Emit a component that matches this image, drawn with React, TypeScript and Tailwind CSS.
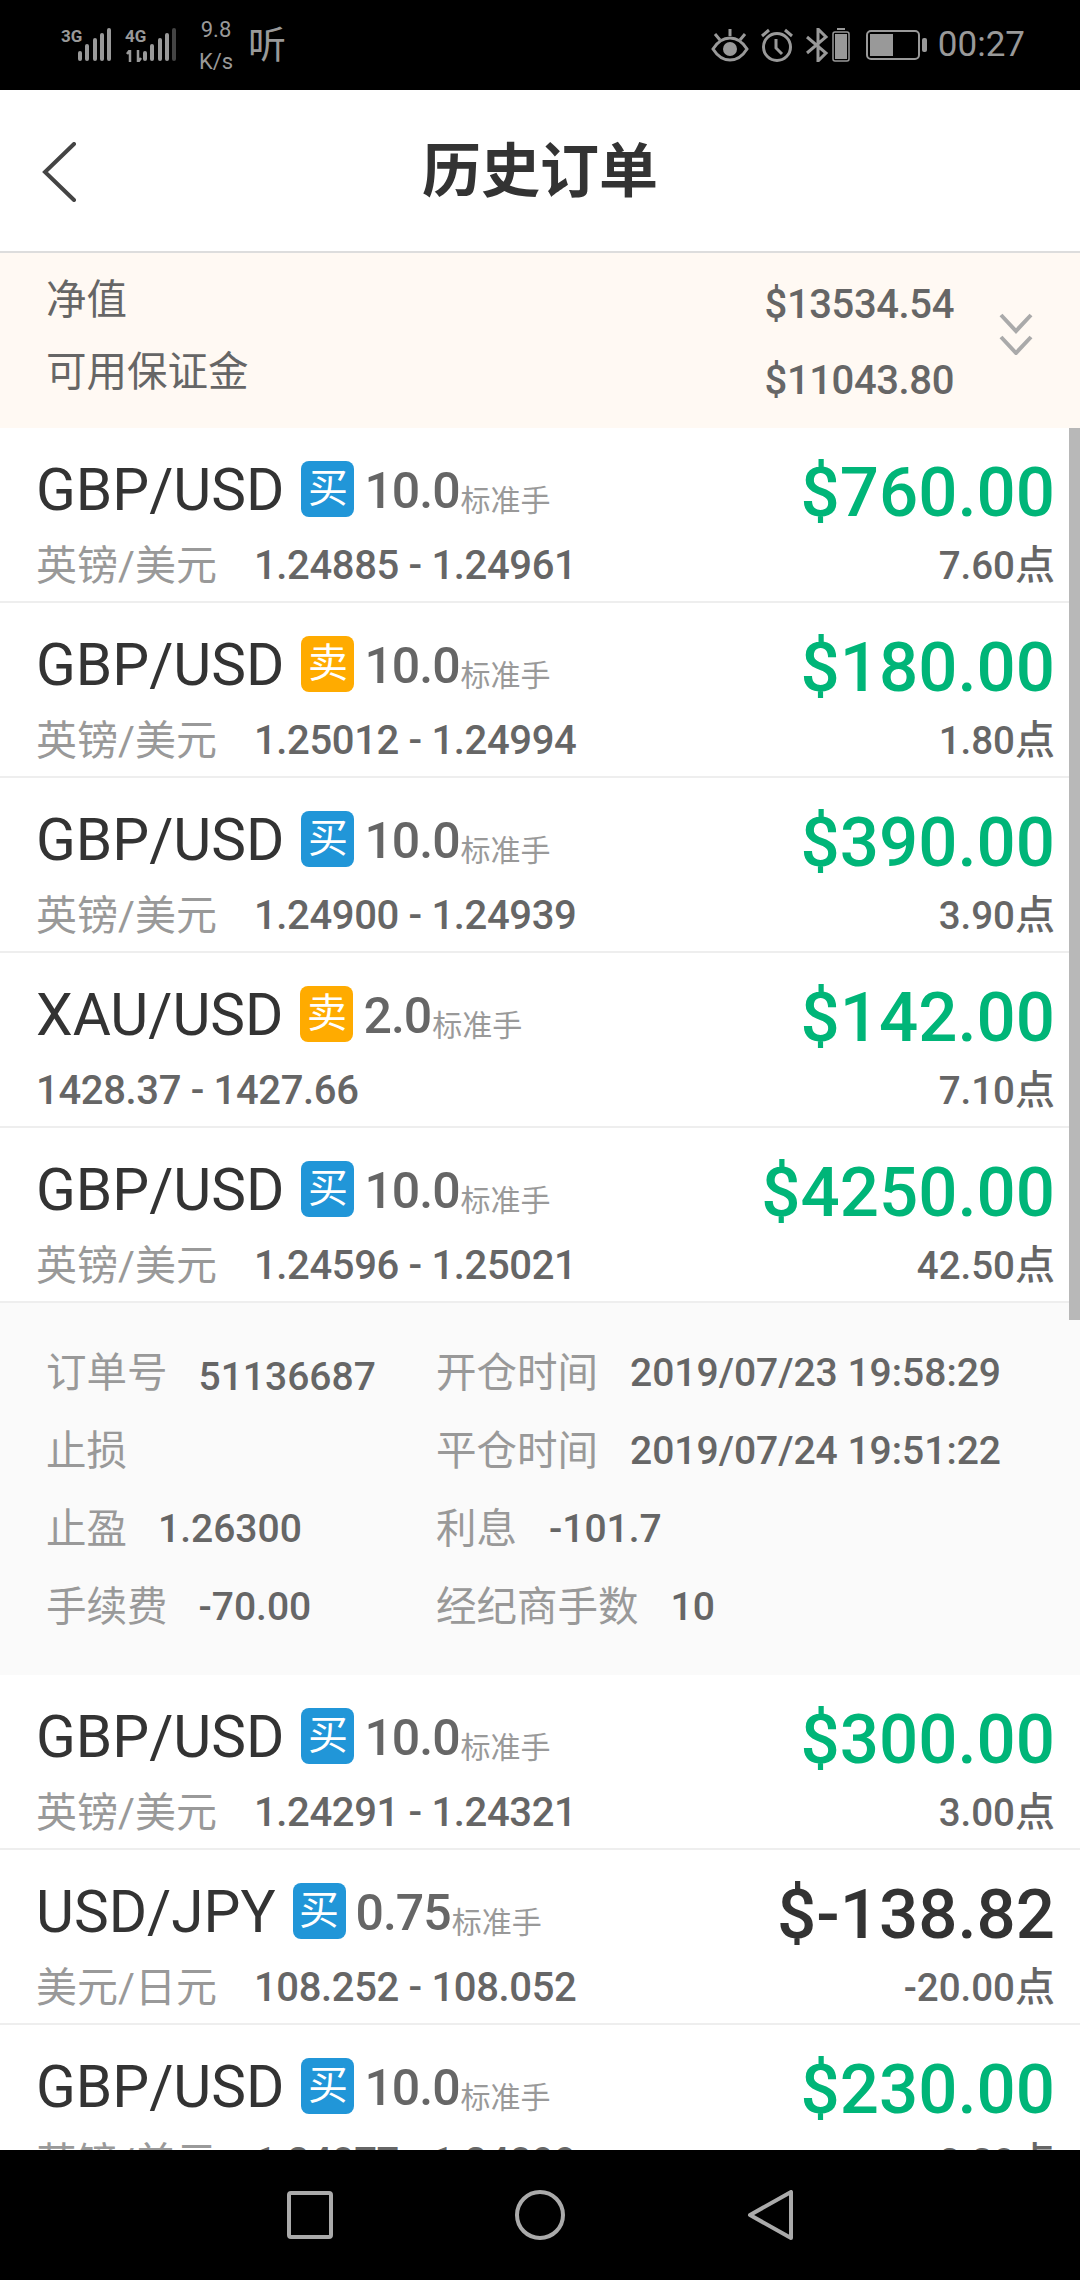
const orders = [
  { pair: 'GBP/USD', side: 'buy', lots: '10.0', name: '英镑/美元', range: '1.24885 - 1.24961', profit: '$760.00', points: '7.60' },
  { pair: 'GBP/USD', side: 'sell', lots: '10.0', name: '英镑/美元', range: '1.25012 - 1.24994', profit: '$180.00', points: '1.80' },
  { pair: 'GBP/USD', side: 'buy', lots: '10.0', name: '英镑/美元', range: '1.24900 - 1.24939', profit: '$390.00', points: '3.90' },
  { pair: 'XAU/USD', side: 'sell', lots: '2.0', name: '', range: '1428.37 - 1427.66', profit: '$142.00', points: '7.10' },
  { pair: 'GBP/USD', side: 'buy', lots: '10.0', name: '英镑/美元', range: '1.24596 - 1.25021', profit: '$4250.00', points: '42.50', open: true },
  { pair: 'GBP/USD', side: 'buy', lots: '10.0', name: '英镑/美元', range: '1.24291 - 1.24321', profit: '$300.00', points: '3.00' },
  { pair: 'USD/JPY', side: 'buy', lots: '0.75', name: '美元/日元', range: '108.252 - 108.052', profit: '$-138.82', points: '-20.00' },
  { pair: 'GBP/USD', side: 'buy', lots: '10.0', name: '英镑/美元', range: '1.24077 - 1.24099', profit: '$230.00', points: '2.30' },
];

const details = [
  ['订单号', '51136687', '开仓时间', '2019/07/23 19:58:29'],
  ['止损', '', '平仓时间', '2019/07/24 19:51:22'],
  ['止盈', '1.26300', '利息', '-101.7'],
  ['手续费', '-70.00', '经纪商手数', '10'],
];

function Bars({ dim }: { dim?: boolean }) {
  return (
    <svg width="35" height="33" viewBox="0 0 35 33" className="block">
      <rect x="0" y="23" width="4" height="10" rx="2" fill="#999" />
      <rect x="7" y="16" width="4" height="17" rx="2" fill="#999" />
      <rect x="15" y="10" width="4" height="23" rx="2" fill="#999" />
      <rect x="22" y="5" width="4" height="28" rx="2" fill="#999" />
      <rect x="29" y="0" width="4" height="33" rx="2" fill={dim ? '#444' : '#999'} />
    </svg>
  );
}

function StatusBar() {
  return (
    <div className="h-[90px] bg-black flex items-center justify-between pl-[61px] pr-[55px] text-[#999] shrink-0">
      <div className="flex items-center">
        <div className="relative w-[52px] h-[34px] flex justify-end">
          <span className="absolute left-0 top-[-2px] text-[17px] leading-[20px] font-bold">3G</span>
          <Bars />
        </div>
        <div className="relative w-[53px] h-[34px] ml-[12px] flex justify-end">
          <span className="absolute left-0 top-[-2px] text-[17px] leading-[20px] font-bold">4G</span>
          <svg width="18" height="12" viewBox="0 0 18 12" className="absolute left-0 bottom-0">
            <path d="M5 0v12M2 4l3-4M13 0v12l3-4" stroke="#999" strokeWidth="2.5" fill="none" />
          </svg>
          <Bars dim />
        </div>
        <div className="ml-[18px] w-[40px] text-center text-[22px] leading-[32px] mt-[1px]">
          <div>9.8</div>
          <div>K/s</div>
        </div>
        <span className="ml-[12px] text-[38px] leading-[40px]">听</span>
      </div>
      <div className="flex items-center">
        <svg width="38" height="34" viewBox="0 0 38 34" fill="none" stroke="#999" strokeWidth="3" className="block">
          <path d="M2 21c5-8 10-11 17-11s12 3 17 11c-5 8-10 11-17 11S7 29 2 21z" />
          <circle cx="19" cy="21" r="7" fill="#999" stroke="none" />
          <path d="M19 1v7M4 6l5 6M34 6l-5 6" />
        </svg>
        <svg width="34" height="34" viewBox="0 0 34 34" fill="none" stroke="#999" strokeWidth="3" className="block ml-[11px]">
          <circle cx="17" cy="19" r="13.5" />
          <path d="M16 11v9l6 6M2 8l7-6M32 8l-7-6" />
        </svg>
        <svg width="23" height="34" viewBox="0 0 23 34" fill="none" stroke="#999" strokeWidth="3" className="block ml-[12px]">
          <path d="M1 9l19 16-8 8V1l8 8L1 25" />
        </svg>
        <svg width="18" height="34" viewBox="0 0 18 34" className="block ml-[3px]">
          <rect x="5" y="0" width="8" height="2" fill="#999" />
          <rect x="1" y="4" width="16" height="29" rx="2" fill="none" stroke="#999" strokeWidth="1.5" />
          <rect x="3" y="6" width="12" height="25" fill="#999" />
        </svg>
        <svg width="61" height="30" viewBox="0 0 61 30" className="block ml-[16px]">
          <rect x="1" y="1" width="52" height="28" rx="4" fill="none" stroke="#999" strokeWidth="2" />
          <rect x="4" y="4" width="23" height="22" fill="#999" />
          <rect x="56" y="8" width="5" height="14" rx="2" fill="#999" />
        </svg>
        <span className="ml-[11px] text-[35px] leading-[40px]">00:27</span>
      </div>
    </div>
  );
}

function Header() {
  return (
    <div className="relative h-[163px] bg-white border-b-2 border-[#dddddd] flex items-center justify-center shrink-0">
      <svg width="36" height="60" viewBox="0 0 36 60" fill="none" stroke="#444" strokeWidth="4" strokeLinecap="round" className="absolute left-[41px] top-[52px]">
        <path d="M33 2L4 30l29 28" />
      </svg>
      <h1 className="text-[59px] leading-[80px] font-bold text-[#333] mt-[2px]">历史订单</h1>
    </div>
  );
}

function Summary() {
  return (
    <div className="h-[175px] bg-[#fff9f3] flex justify-between shrink-0 pl-[46px] pr-[47px]">
      <div className="pt-[22px] text-[40.5px] leading-[50px] text-[#666] flex flex-col gap-[22px]">
        <div>净值</div>
        <div>可用保证金</div>
      </div>
      <div className="flex items-center">
        <div className="text-[40px] tracking-[-0.4px] leading-[50px] font-medium text-[#666] flex flex-col gap-[26px] pt-[5px]">
          <div>$13534.54</div>
          <div>$11043.80</div>
        </div>
        <svg width="34" height="42" viewBox="0 0 34 42" fill="none" stroke="#aaa" strokeWidth="4" className="block ml-[45px] mb-[14px]">
          <path d="M2 2l15 16L32 2M2 24l15 16 15-16" />
        </svg>
      </div>
    </div>
  );
}

function OrderRow({ o }: { o: (typeof orders)[number] }) {
  const buy = o.side === 'buy';
  const loss = o.profit.startsWith('$-');
  return (
    <div className="h-[175px] border-b-2 border-[#eeeeee] flex justify-between pl-[36px] pr-[25px] pt-[19px]">
      <div>
        <div className="h-[84px] flex items-center">
          <span className="text-[58.5px] leading-[84px] text-[#333] mt-[2px]">{o.pair}</span>
          <span className={`ml-[17px] w-[53px] h-[56px] rounded-[8px] flex items-center justify-center text-[40px] leading-none text-white ${buy ? 'bg-[#2196d8]' : 'bg-[#ffab00]'}`}>
            {buy ? '买' : '卖'}
          </span>
          <span className="ml-[10px] text-[50px] tracking-[-1px] leading-[84px] font-medium text-[#666] mt-[4px]">{o.lots}</span>
          <span className="ml-[1px] text-[30px] leading-[30px] text-[#999] mt-[24px]">标准手</span>
        </div>
        <div className="h-[48px] mt-[11px] flex items-center">
          {o.name && <span className="text-[41px] leading-[48px] text-[#999] mr-[37px]">{o.name}</span>}
          <span className="text-[40px] leading-[48px] tracking-[-0.35px] font-medium text-[#666]">{o.range}</span>
        </div>
      </div>
      <div className="text-right">
        <div className={`h-[92px] text-[69px] leading-[92px] font-medium ${loss ? 'text-[#333]' : 'text-[#00b578]'}`}>{o.profit}</div>
        <div className="h-[50px] mt-[2px] text-[38.5px] leading-[50px] font-medium text-[#666]">
          {o.points}
          <span className="text-[40px]">点</span>
        </div>
      </div>
    </div>
  );
}

function Detail() {
  return (
    <div className="h-[372px] bg-[#fafafa] pl-[46px] pt-[31px] grid grid-cols-[390px_1fr] auto-rows-[78px] text-[40.5px]">
      {details.map(([a, b, c, d]) => (
        <div key={a} className="contents">
          <div className="flex items-center gap-[31px]">
            <span className="text-[#999]">{a}</span>
            {b && <span className={`text-[39px] font-medium text-[#666] ${b === '51136687' ? 'mt-[8px]' : ''}`}>{b}</span>}
          </div>
          <div className="flex items-center gap-[32px]">
            <span className="text-[#999]">{c}</span>
            <span className="text-[39px] font-medium text-[#666]">{d}</span>
          </div>
        </div>
      ))}
    </div>
  );
}

function NavBar() {
  return (
    <div className="h-[130px] bg-black shrink-0 flex items-center justify-center gap-[180px]">
      <svg width="50" height="50" viewBox="0 0 50 50" fill="none" stroke="#aaa" strokeWidth="4" strokeLinejoin="round" className="block">
        <rect x="4" y="3" width="42" height="44" rx="2" />
      </svg>
      <svg width="50" height="50" viewBox="0 0 50 50" fill="none" stroke="#aaa" strokeWidth="4" className="block">
        <circle cx="25" cy="25" r="23" />
      </svg>
      <svg width="50" height="50" viewBox="0 0 50 50" fill="none" stroke="#aaa" strokeWidth="4" strokeLinejoin="round" className="block">
        <path d="M46 2v46L5 25z" />
      </svg>
    </div>
  );
}

export default function App() {
  return (
    <div className="w-[1080px] h-[2280px] overflow-hidden flex flex-col bg-white font-['Roboto','Noto_Sans_CJK_SC',sans-serif]">
      <StatusBar />
      <Header />
      <Summary />
      <div className="relative flex-1 min-h-0 overflow-hidden">
        {orders.map((o, i) => (
          <div key={i}>
            <OrderRow o={o} />
            {o.open && <Detail />}
          </div>
        ))}
        <div className="absolute right-0 top-0 w-[11px] h-[892px] bg-[#b8b8b8]" />
      </div>
      <NavBar />
    </div>
  );
}
